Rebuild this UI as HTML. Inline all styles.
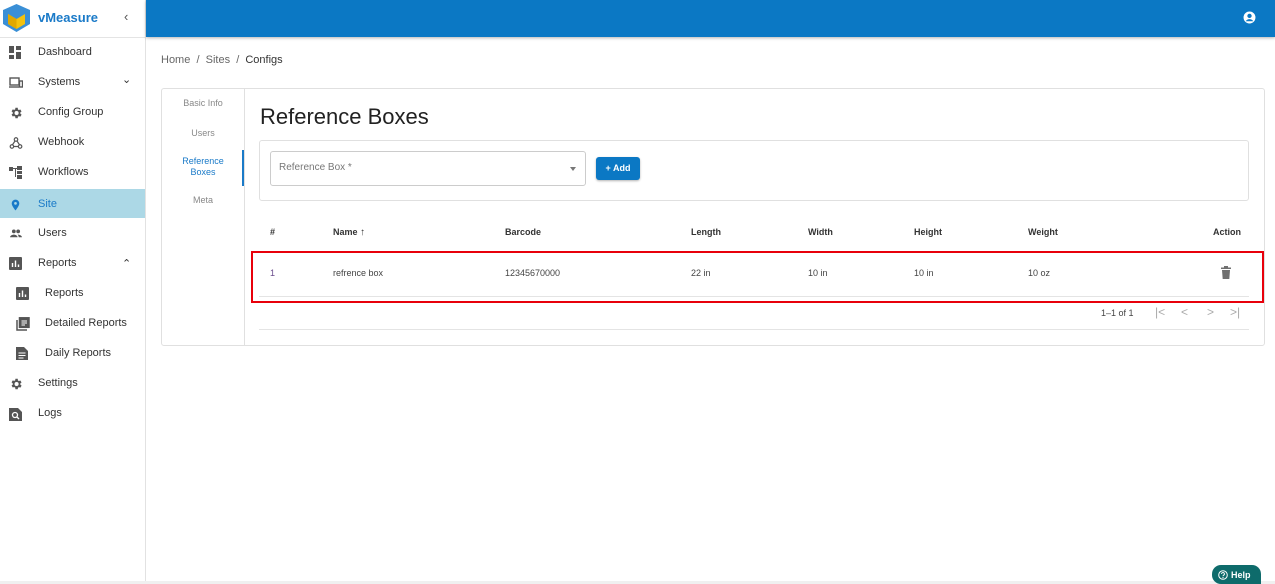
<!DOCTYPE html>
<html><head><meta charset="utf-8"><style>
*{margin:0;padding:0;box-sizing:border-box}
body{width:1275px;height:584px;overflow:hidden;background:#fff;font-family:"Liberation Sans",sans-serif;position:relative;color:#333}
.a{position:absolute}
.nav{position:absolute;left:0;width:145px;height:30px;font-size:11px;color:#333}
.nav svg{position:absolute;left:9px;top:9px}
.nav span{position:absolute;left:38px;top:9px}
.sub svg{left:16px}.sub span{left:45px}
.th{position:absolute;top:227px;font-size:9px;font-weight:bold;color:#333}
.td{position:absolute;top:268px;font-size:9px;color:#444}
</style></head><body>
<div class="a" style="left:0;top:0;width:146px;height:584px;border-right:1px solid #e2e2e2"></div>
<div class="a" style="left:0;top:37px;width:145px;height:1px;background:#e4e4e4"></div>
<svg class="a" style="left:2px;top:3px" width="29" height="30" viewBox="0 0 29 30"><path d="M14.5 1 L28 7 L28 21 L14.5 29 L1 21 L1 7Z" fill="#3a8fd6"/><path d="M6 11 L14.5 16 L23 11 L23 21 L14.5 26 L6 21Z" fill="#f4c20d"/><path d="M6 11 L14.5 16 L14.5 26 L6 21Z" fill="#e0a800"/></svg>
<div class="a" style="left:38px;top:10px;font-size:13px;font-weight:bold;color:#1a7ac8">vMeasure</div>
<div class="a" style="left:124px;top:9px;font-size:13px;color:#555">‹</div>
<div class="a" style="left:146px;top:0;width:1129px;height:37px;background:#0b78c4;box-shadow:0 1px 3px rgba(0,0,0,.3)"></div>
<svg class="a" style="left:1243px;top:11px" width="13" height="13" viewBox="0 0 24 24"><circle cx="12" cy="12" r="11" fill="#fff"/><circle cx="12" cy="9" r="4" fill="#0b78c4"/><path d="M5 19c2-3 4-4 7-4s5 1 7 4" fill="#0b78c4"/></svg>

<div class="nav" style="top:37px"><svg width="13" height="13" viewBox="0 0 13 13" fill="#555"><rect x="0" y="0" width="5" height="7"/><rect x="7" y="0" width="5" height="4"/><rect x="0" y="9" width="5" height="4"/><rect x="7" y="6" width="5" height="7"/></svg><span>Dashboard</span></div>
<div class="nav" style="top:67px"><svg width="14" height="13" viewBox="0 0 14 13" fill="none" stroke="#555" stroke-width="1.4"><rect x="1" y="2" width="9" height="7"/><path d="M0 11h10"/><rect x="10.5" y="5" width="3" height="6"/></svg><span>Systems</span><span style="left:122px;top:6px;font-size:11px">&#8964;</span></div>
<div class="nav" style="top:97px"><svg width="14" height="14" viewBox="0 0 24 24" fill="#555"><path d="M19.4 13a7 7 0 000-2l2.1-1.6-2-3.5-2.5 1a7 7 0 00-1.7-1L15 3h-4l-.4 2.7a7 7 0 00-1.7 1l-2.5-1-2 3.5L6.5 11a7 7 0 000 2l-2.1 1.6 2 3.5 2.5-1a7 7 0 001.7 1L11 21h4l.4-2.7a7 7 0 001.7-1l2.5 1 2-3.5zM13 15.5a3.5 3.5 0 110-7 3.5 3.5 0 010 7z"/></svg><span>Config Group</span></div>
<div class="nav" style="top:127px"><svg width="14" height="14" viewBox="0 0 24 24" fill="none" stroke="#555" stroke-width="2"><circle cx="12" cy="6" r="3"/><circle cx="5" cy="18" r="3"/><circle cx="19" cy="18" r="3"/><path d="M10 9l-4 6M8 18h8M14 9l4 6"/></svg><span>Webhook</span></div>
<div class="nav" style="top:157px"><svg width="14" height="13" viewBox="0 0 14 13" fill="#555"><rect x="0" y="1" width="4" height="4"/><rect x="8" y="0" width="5" height="4"/><rect x="8" y="5" width="5" height="3"/><rect x="8" y="9" width="5" height="4"/><rect x="4" y="2" width="4" height="1"/><rect x="6" y="2" width="1" height="9"/></svg><span>Workflows</span></div>
<div class="nav" style="top:189px;background:#acd8e6;height:29px"><svg width="13" height="14" viewBox="0 0 24 24" fill="#1a7ac8"><path d="M12 2a7 7 0 00-7 7c0 5 7 13 7 13s7-8 7-13a7 7 0 00-7-7zm0 9.5a2.5 2.5 0 110-5 2.5 2.5 0 010 5z"/></svg><span style="color:#1a7ac8">Site</span></div>
<div class="nav" style="top:218px"><svg width="14" height="13" viewBox="0 0 24 24" fill="#555"><circle cx="8" cy="8" r="3.5"/><circle cx="16" cy="8" r="3.5"/><path d="M1 19c0-3 4-5 7-5s7 2 7 5zM15 14c3 0 8 1.5 8 5h-6c0-2-1-4-2-5z"/></svg><span>Users</span></div>
<div class="nav" style="top:248px"><svg width="13" height="13" viewBox="0 0 13 13"><rect width="13" height="13" rx="1" fill="#555"/><path d="M3.5 10V6M6.5 10V3.5M9.5 10V7.5" stroke="#fff" stroke-width="1.4"/></svg><span>Reports</span><span style="left:122px;top:9px;font-size:11px">&#8963;</span></div>
<div class="nav sub" style="top:278px"><svg width="13" height="13" viewBox="0 0 13 13"><rect width="13" height="13" rx="1" fill="#555"/><path d="M3.5 10V6M6.5 10V3.5M9.5 10V7.5" stroke="#fff" stroke-width="1.4"/></svg><span>Reports</span></div>
<div class="nav sub" style="top:308px"><svg width="14" height="14" viewBox="0 0 14 14" fill="none" stroke="#555" stroke-width="1.5"><path d="M1 3v10h10"/><rect x="3.5" y="0.8" width="9.5" height="9.5" fill="#555"/><path d="M5.5 4h5.5M5.5 6h5.5M5.5 8h3.5" stroke="#fff" stroke-width="1"/></svg><span>Detailed Reports</span></div>
<div class="nav sub" style="top:338px"><svg width="12" height="13" viewBox="0 0 12 13"><path d="M0 0h8l4 4v9H0z" fill="#555"/><path d="M2.5 6h7M2.5 8.5h7M2.5 11h5" stroke="#fff" stroke-width="1"/></svg><span>Daily Reports</span></div>
<div class="nav" style="top:368px"><svg width="14" height="14" viewBox="0 0 24 24" fill="#555"><path d="M19.4 13a7 7 0 000-2l2.1-1.6-2-3.5-2.5 1a7 7 0 00-1.7-1L15 3h-4l-.4 2.7a7 7 0 00-1.7 1l-2.5-1-2 3.5L6.5 11a7 7 0 000 2l-2.1 1.6 2 3.5 2.5-1a7 7 0 001.7 1L11 21h4l.4-2.7a7 7 0 001.7-1l2.5 1 2-3.5zM13 15.5a3.5 3.5 0 110-7 3.5 3.5 0 010 7z"/></svg><span>Settings</span></div>
<div class="nav" style="top:398px"><svg width="13" height="14" viewBox="0 0 13 14"><path d="M0 1h9l4 4v9H0z" fill="#555"/><circle cx="6" cy="8" r="2.5" fill="none" stroke="#fff" stroke-width="1.3"/><path d="M8 10l2 2" stroke="#fff" stroke-width="1.3"/></svg><span>Logs</span></div>

<div class="a" style="left:161px;top:54px;font-size:11px;color:#666">Home&nbsp; /&nbsp; Sites&nbsp; /&nbsp; <span style="color:#333">Configs</span></div>

<div class="a" style="left:161px;top:88px;width:1104px;height:258px;border:1px solid #e0e0e0;border-radius:3px"></div>
<div class="a" style="left:244px;top:89px;width:1px;height:256px;background:#e0e0e0"></div>
<div class="a" style="left:242px;top:150px;width:2px;height:36px;background:#1a7ac8"></div>
<div class="a" style="left:162px;top:98px;width:82px;text-align:center;font-size:9px;color:#888">Basic Info</div>
<div class="a" style="left:162px;top:128px;width:82px;text-align:center;font-size:9px;color:#888">Users</div>
<div class="a" style="left:162px;top:156px;width:82px;text-align:center;font-size:9px;color:#1a7ac8;line-height:11px">Reference<br>Boxes</div>
<div class="a" style="left:162px;top:195px;width:82px;text-align:center;font-size:9px;color:#888">Meta</div>

<div class="a" style="left:260px;top:104px;font-size:22px;color:#222">Reference Boxes</div>
<div class="a" style="left:259px;top:140px;width:990px;height:61px;border:1px solid #e0e0e0;border-radius:3px"></div>
<div class="a" style="left:270px;top:151px;width:316px;height:35px;border:1px solid #ccc;border-radius:3px"></div>
<div class="a" style="left:279px;top:162px;font-size:10px;color:#777">Reference Box *</div>
<div class="a" style="left:570px;top:167px;width:0;height:0;border-left:3.5px solid transparent;border-right:3.5px solid transparent;border-top:4px solid #777"></div>
<div class="a" style="left:596px;top:157px;width:44px;height:23px;background:#0b78c4;border-radius:3px;color:#fff;font-size:9px;font-weight:bold;text-align:center;line-height:23px;box-shadow:0 1px 2px rgba(0,0,0,.3)">+ Add</div>

<div class="th" style="left:270px">#</div>
<div class="th" style="left:333px">Name <span style="font-weight:normal;font-size:10px">↑</span></div>
<div class="th" style="left:505px">Barcode</div>
<div class="th" style="left:691px">Length</div>
<div class="th" style="left:808px">Width</div>
<div class="th" style="left:914px">Height</div>
<div class="th" style="left:1028px">Weight</div>
<div class="th" style="left:1213px">Action</div>
<div class="a" style="left:259px;top:296px;width:990px;height:1px;background:#e4e4e4"></div>
<div class="td" style="left:270px;color:#6a4c8c">1</div>
<div class="td" style="left:333px">refrence box</div>
<div class="td" style="left:505px">12345670000</div>
<div class="td" style="left:691px">22 in</div>
<div class="td" style="left:808px">10 in</div>
<div class="td" style="left:914px">10 in</div>
<div class="td" style="left:1028px">10 oz</div>
<svg class="a" style="left:1221px;top:266px" width="10" height="13" viewBox="0 0 10 13" fill="#707070"><rect x="0" y="1.5" width="10" height="1.5"/><rect x="3" y="0" width="4" height="2"/><path d="M1 4h8l-.7 9H1.7z"/></svg>
<div class="a" style="left:251px;top:251px;width:1013px;height:52px;border:2px solid #e8000b"></div>
<div class="a" style="left:1101px;top:308px;font-size:9px;color:#444">1–1 of 1</div>
<div class="a" style="left:1155px;top:305px;font-size:12px;color:#aaa">|&lt;</div>
<div class="a" style="left:1181px;top:305px;font-size:12px;color:#aaa">&lt;</div>
<div class="a" style="left:1207px;top:305px;font-size:12px;color:#aaa">&gt;</div>
<div class="a" style="left:1230px;top:305px;font-size:12px;color:#aaa">&gt;|</div>
<div class="a" style="left:259px;top:329px;width:990px;height:1px;background:#e4e4e4"></div>

<div class="a" style="left:0;top:581px;width:1275px;height:3px;background:#f0f0f0"></div>
<div class="a" style="left:1212px;top:565px;width:49px;height:19px;background:#0e6b6b;border-radius:9px 9px 0 9px"></div>
<svg class="a" style="left:1218px;top:570px" width="10" height="10" viewBox="0 0 10 10"><circle cx="5" cy="5" r="4.3" fill="none" stroke="#fff" stroke-width="1"/><path d="M3.6 4a1.4 1.4 0 112 1.2c-.5.3-.6.5-.6 1" fill="none" stroke="#fff" stroke-width="1"/><circle cx="5" cy="7.6" r=".6" fill="#fff"/></svg>
<div class="a" style="left:1231px;top:570px;font-size:9px;font-weight:bold;color:#fff">Help</div>
</body></html>
